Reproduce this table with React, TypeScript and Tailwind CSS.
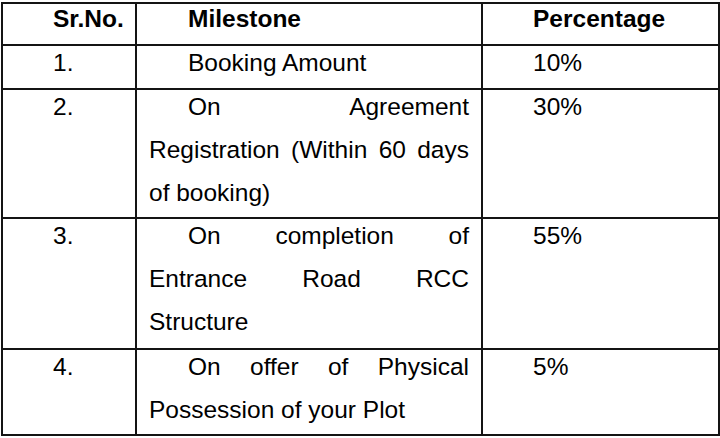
import { Fragment, type ReactNode } from 'react'

const rows = [
  { no: '1.', lines: ['Booking Amount'], pct: '10%' },
  { no: '2.', lines: ['On Agreement', 'Registration (Within 60 days', 'of booking)'], pct: '30%' },
  { no: '3.', lines: ['On completion of', 'Entrance Road RCC', 'Structure'], pct: '55%' },
  { no: '4.', lines: ['On offer of Physical', 'Possession of your Plot'], pct: '5%' },
]

function Cell({ children, className = '' }: { children: ReactNode; className?: string }) {
  return <div className={`border-r-2 border-b-2 border-[#141414] overflow-hidden ${className}`}>{children}</div>
}

export default function App() {
  return (
    <div
      className="w-[720px] h-[438px] bg-white text-black pt-[2px] pl-[1px]"
      style={{ fontFamily: '"Liberation Sans", Arial, sans-serif' }}
    >
      <div className="grid grid-cols-[134px_346px_237px] grid-rows-[42px_44px_129px_131px_86px] w-[719px] border-l-2 border-t-2 border-[#141414] text-[24.5px] leading-[43px]">
        <Cell className="pl-[50px] font-bold">
          <div className="-mt-[7px]">Sr.No.</div>
        </Cell>
        <Cell className="pl-[51px] font-bold">
          <div className="-mt-[7px]">Milestone</div>
        </Cell>
        <Cell className="pl-[50px] font-bold">
          <div className="-mt-[7px]">Percentage</div>
        </Cell>

        {rows.map((row) => (
          <Fragment key={row.no}>
            <Cell className="pl-[50px]">
              <div className="-mt-[5px]">{row.no}</div>
            </Cell>
            <Cell className="pl-[12px] pr-[12px]">
              <div className="-mt-[5px]">
                {row.lines.map((line, i) => {
                  const last = i === row.lines.length - 1
                  return (
                    <div
                      key={i}
                      className={`whitespace-nowrap ${i === 0 ? 'pl-[39px]' : ''} ${
                        last ? 'text-left' : 'text-justify [text-align-last:justify]'
                      }`}
                    >
                      {line}
                    </div>
                  )
                })}
              </div>
            </Cell>
            <Cell className="pl-[50px]">
              <div className="-mt-[5px]">{row.pct}</div>
            </Cell>
          </Fragment>
        ))}
      </div>
    </div>
  )
}
